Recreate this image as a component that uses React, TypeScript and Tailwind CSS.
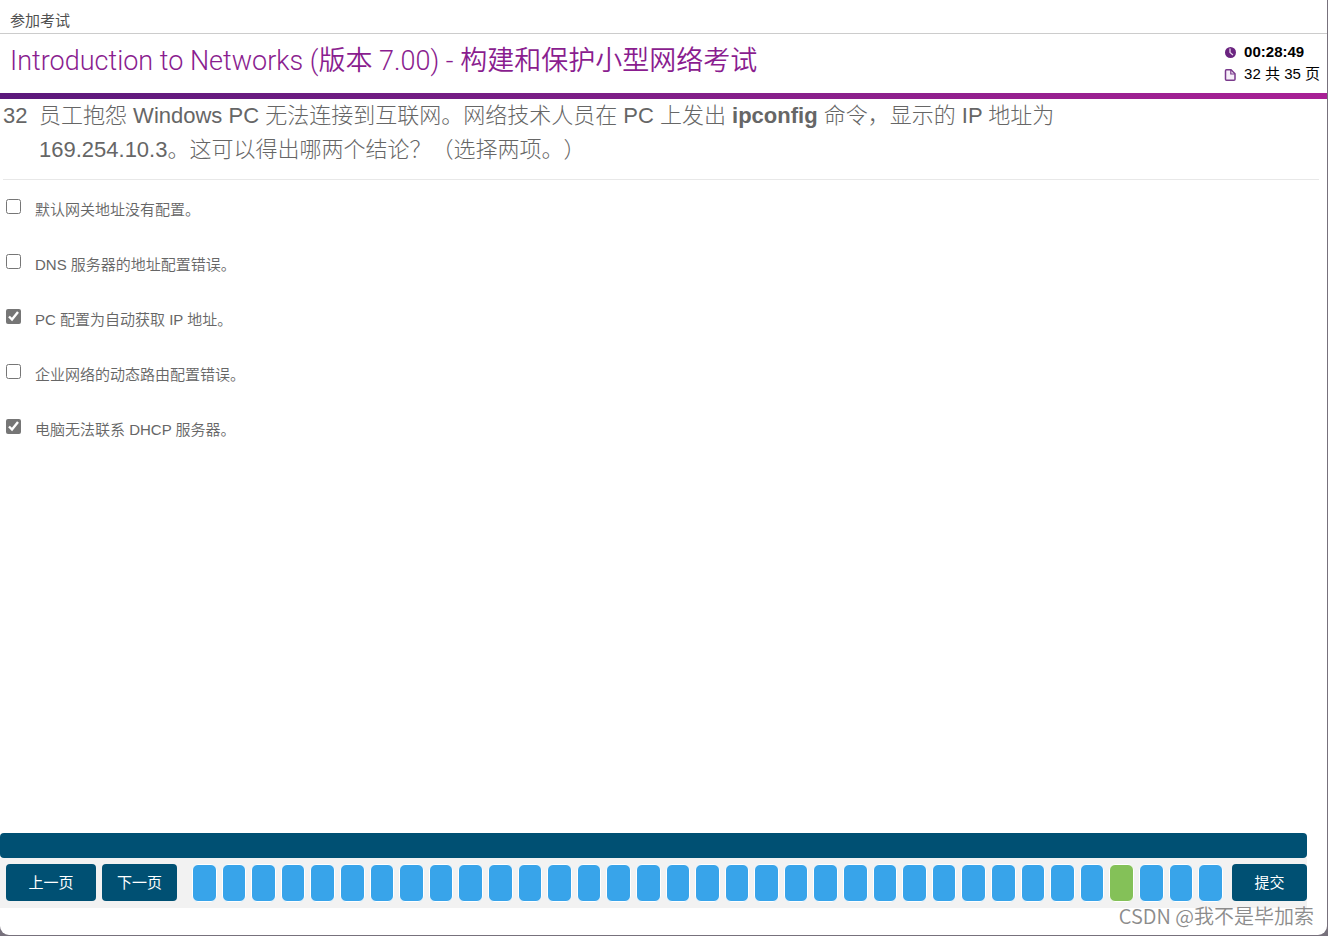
import { useState } from 'react';

const TOTAL_PAGES = 35;
const CURRENT_PAGE = 32;

const answers = [
  { id: 'a1', text: '默认网关地址没有配置。', selected: false },
  { id: 'a2', text: 'DNS 服务器的地址配置错误。', selected: false },
  { id: 'a3', text: 'PC 配置为自动获取 IP 地址。', selected: true },
  { id: 'a4', text: '企业网络的动态路由配置错误。', selected: false },
  { id: 'a5', text: '电脑无法联系 DHCP 服务器。', selected: true },
];

function ClockIcon() {
  return (
    <svg viewBox="0 0 12 12" className="size-3" aria-hidden="true">
      <circle cx="6.5" cy="6.5" r="5.5" fill="#6b2480" />
      <path d="M6 2.5v4l3 2.4" fill="none" stroke="#e6d6ea" strokeWidth="1.3" />
    </svg>
  );
}

function PageIcon() {
  return (
    <svg viewBox="0 0 12 12" className="mt-0.5 size-3" aria-hidden="true">
      <path
        d="M2.5 .8h4.500l4 4v5.400q0 1-1 1H2.500q-1 0-1-1V1.800q0-1 1-1z"
        fill="#f6eef8"
        stroke="#7a3a8c"
        strokeWidth="1.5"
      />
      <path d="M6.800 1v4h4" fill="none" stroke="#7a3a8c" strokeWidth="1.2" />
    </svg>
  );
}

function ExamHeader() {
  return (
    <header>
      <div className="border-b border-[#ccc] pt-[11px] pb-0.5 pl-2.5 text-[15px] leading-5 text-[#505050]">
        参加考试
      </div>
      <div className="flex items-start justify-between pl-2.5 pr-[7px]">
        <h1 className="pt-[9px] pb-3.5 font-[Roboto,'Noto_Sans_CJK_SC',sans-serif] text-[27px] leading-9 font-[350] text-[#8a1d8f]">
          Introduction to Networks (版本 7.00) - 构建和保护小型网络考试
        </h1>
        <div className="pt-[7px] text-[15px] leading-[22px] text-black">
          <div className="flex items-center gap-2">
            <ClockIcon />
            <strong>00:28:49</strong>
          </div>
          <div className="flex items-center gap-2">
            <PageIcon />
            <span>
              {CURRENT_PAGE} 共 {TOTAL_PAGES} 页
            </span>
          </div>
        </div>
      </div>
      <div className="h-1.5 bg-linear-to-r from-[#5b187b] to-[#a82095]" />
    </header>
  );
}

function Question() {
  const [selected, setSelected] = useState(
    answers.filter((a) => a.selected).map((a) => a.id)
  );

  const toggle = (id: string) =>
    setSelected((prev) =>
      prev.includes(id) ? prev.filter((x) => x !== id) : [...prev, id]
    );

  return (
    <main className="pl-[3px] pr-2">
      <div className="flex border-b border-[#e8e8e8] pb-3 text-[22px] leading-[34px] text-[#666]">
        <span className="w-9 shrink-0">{CURRENT_PAGE}</span>
        <p className="max-w-[1080px] font-light [text-spacing-trim:space-all]">
          员工抱怨 Windows PC 无法连接到互联网。网络技术人员在 PC 上发出{' '}
          <strong className="font-bold">ipconfig</strong> 命令，显示的 IP 地址为
          169.254.10.3。这可以得出哪两个结论？（选择两项。）
        </p>
      </div>
      <ul>
        {answers.map((answer) => (
          <li key={answer.id} className="flex h-[55px] items-start pt-[19px] pl-[3px]">
            <input
              id={answer.id}
              type="checkbox"
              checked={selected.includes(answer.id)}
              onChange={() => toggle(answer.id)}
              className="size-[15px] accent-[#767676]"
            />
            <label
              htmlFor={answer.id}
              className="pl-3.5 text-[15px] leading-[22px] font-[350] text-[#666]"
            >
              {answer.text}
            </label>
          </li>
        ))}
      </ul>
    </main>
  );
}

function NavBar() {
  return (
    <footer className="mt-auto mr-5 mb-[27px]">
      <div className="h-[25px] rounded-sm bg-[#005073]" />
      <nav className="flex h-[50px] items-start bg-[#f2f2f2] pt-1.5 pl-1.5 text-[15px] text-white">
        <button type="button" className="h-[37px] w-[90px] shrink-0 rounded-sm bg-[#005073] pt-0.5">
          上一页
        </button>
        <button type="button" className="ml-1.5 h-[37px] w-[75px] shrink-0 rounded-sm bg-[#005073] pt-0.5">
          下一页
        </button>
        <div className="mr-[9px] ml-[15px] flex flex-1 gap-[5px]">
          {Array.from({ length: TOTAL_PAGES }, (_, i) => {
            const page = i + 1;
            return (
              <button
                key={page}
                type="button"
                aria-label={`第 ${page} 页`}
                className={[
                  'h-[38px] flex-1 rounded-md border border-white',
                  page === CURRENT_PAGE ? 'bg-[#84c158]' : 'bg-[#38a4ea]',
                ].join(' ')}
              />
            );
          })}
        </div>
        <button type="button" className="h-[37px] w-[75px] shrink-0 rounded-sm bg-[#005073] pt-0.5">
          提交
        </button>
      </nav>
    </footer>
  );
}

export default function App() {
  return (
    <div className="relative flex min-h-screen bg-[#77717c] pr-px pb-px font-['Liberation_Sans','Noto_Sans_CJK_SC',sans-serif]">
      <div className="flex flex-1 flex-col rounded-b-[9px] bg-white">
        <ExamHeader />
        <Question />
        <NavBar />
      </div>
      <div className="absolute right-3.5 bottom-1.5 font-['Noto_Sans_CJK_SC',sans-serif] text-[20px] leading-7 font-[350] text-[#8c8c8c]">
        CSDN @我不是毕加索
      </div>
    </div>
  );
}
